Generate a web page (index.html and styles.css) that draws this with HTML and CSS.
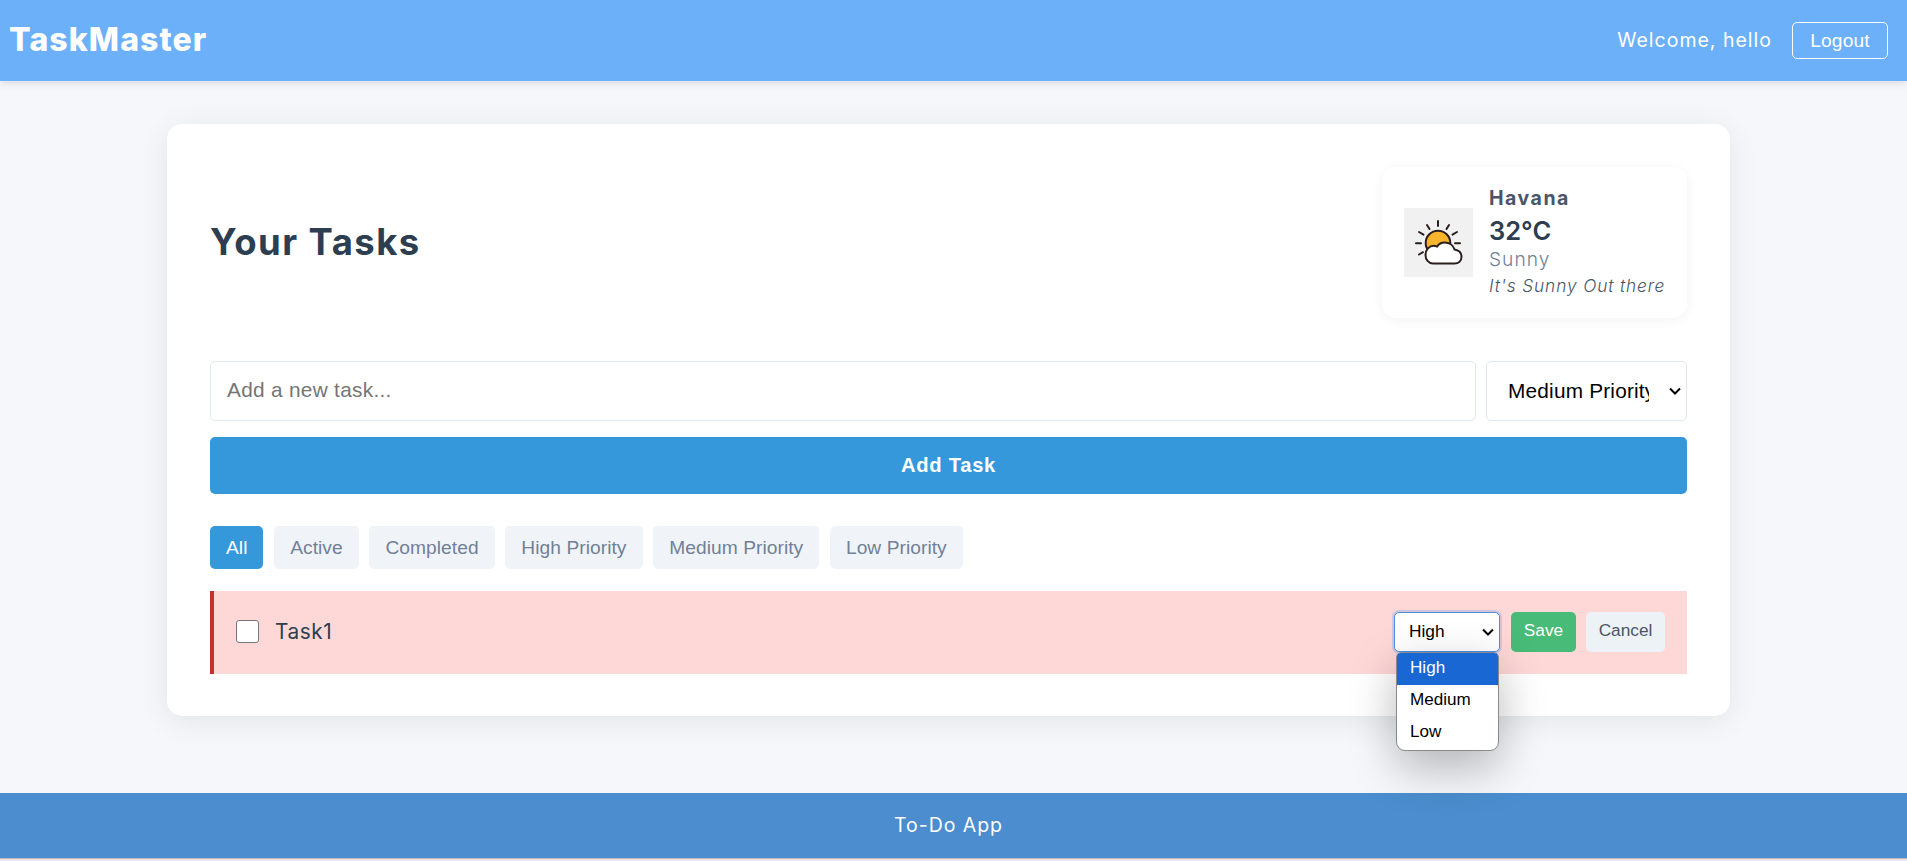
FILE: index.html
```html
<!DOCTYPE html>
<html lang="en">
<head>
<meta charset="utf-8">
<title>TaskMaster</title>
<link rel="stylesheet" href="styles.css">
</head>
<body>
<header class="topbar">
  <div class="brand">TaskMaster</div>
  <div class="account">
    <span class="welcome">Welcome, hello</span>
    <button class="logout">Logout</button>
  </div>
</header>
<main class="main">
  <section class="card">
    <div class="card-head">
      <h1 class="title">Your Tasks</h1>
      <div class="weather">
        <svg class="weather-icon" viewBox="0 0 69 69">
          <rect width="69" height="69" fill="#f1f1f1"/>
          <g stroke="#2b1f1d" stroke-width="2" stroke-linecap="round" stroke-linejoin="round">
            <path fill="none" d="M34 13v5M23 17l2.500 4M45 17l-2.500 4M15 24l4.500 2.600M53 24l-4.500 2.600M12 35.300h5M51 35.300h5M15 46.500l4-2.300"/>
            <circle cx="34" cy="35" r="12.300" fill="#f9b42d"/>
            <path fill="#fff" d="M29 55.500c-4.500 0-7.500-4-7.500-8.500 0-5.500 3.700-9.200 8.300-9.200 1.200 0 2.200.3 3.200.8 1.800-2.600 4.500-4 7.700-4 4.800 0 8.600 3 9.800 6.900 4.300.7 7 3.500 7 7.200 0 4.200-3 6.800-7 6.800z"/>
          </g>
        </svg>
        <div class="weather-text">
          <div class="city">Havana</div>
          <div class="temp">32°C</div>
          <div class="sky">Sunny</div>
          <div class="note">It's Sunny Out there</div>
        </div>
      </div>
    </div>
    <form class="add-form">
      <input class="task-input" type="text" placeholder="Add a new task...">
      <div class="priority"><span class="priority-value">Medium Priority</span>
        <svg class="chevron" viewBox="0 0 12 8"><path d="M1 1.500l5 5 5-5"/></svg></div>
      <button class="add" type="button">Add Task</button>
    </form>
    <nav class="filters">
      <button class="filter active">All</button>
      <button class="filter">Active</button>
      <button class="filter">Completed</button>
      <button class="filter">High Priority</button>
      <button class="filter">Medium Priority</button>
      <button class="filter">Low Priority</button>
    </nav>
    <div class="task">
      <span class="check"></span>
      <span class="task-name">Task1</span>
      <div class="picker">
        <div class="picker-box"><span>High</span>
          <svg class="chevron" viewBox="0 0 12 8"><path d="M1 1.500l5 5 5-5"/></svg></div>
        <ul class="menu">
          <li class="option selected">High</li>
          <li class="option">Medium</li>
          <li class="option">Low</li>
        </ul>
      </div>
      <button class="save">Save</button>
      <button class="cancel">Cancel</button>
    </div>
  </section>
</main>
<footer class="footer">To-Do App</footer>
<div class="edge"></div>
</body>
</html>
```
FILE: styles.css
```css
* { box-sizing: border-box; margin: 0; padding: 0; }
body {
  height: 861px;
  display: flex;
  flex-direction: column;
  overflow: hidden;
  background: #f5f7fb;
  font-family: Inter, "Open Sans", sans-serif;
  color: #2c3e50;
}
button { border: 0; font-family: "Liberation Sans", Arial, sans-serif; }
.topbar {
  height: 81px;
  flex: none;
  padding: 0 19px 0 9px;
  display: flex;
  align-items: center;
  justify-content: space-between;
  background: #6bb0f8;
  color: #fff;
  box-shadow: 0 2px 8px rgba(0, 0, 0, .12);
}
.brand { font-size: 32px; font-weight: 800; line-height: 79px; letter-spacing: 1.100px; padding-bottom: 2px; }
.account { display: flex; align-items: center; gap: 20px; }
.welcome { font-size: 19.500px; letter-spacing: 1px; padding-bottom: 2px; }
.logout {
  width: 96px;
  height: 37px;
  border: 1px solid #fff;
  border-radius: 5px;
  background: transparent;
  color: #fff;
  font-size: 19.200px;
  letter-spacing: .15px;
}
.main { flex: 1; padding: 43px 177px 0 167px; }
.card {
  height: 592px;
  padding: 43px;
  border-radius: 15px;
  background: #fff;
  box-shadow: 0 5px 30px rgba(0, 0, 0, .08);
}
.card-head { display: flex; align-items: center; justify-content: space-between; }
.title { font-size: 36.500px; font-weight: 700; letter-spacing: 1.450px; padding-bottom: 1px; }
.weather {
  width: 305px;
  height: 151px;
  padding-left: 22px;
  display: flex;
  align-items: center;
  gap: 16px;
  border-radius: 14px;
  box-shadow: 0 2px 12px rgba(0, 0, 0, .05);
}
.weather-icon { width: 69px; height: 69px; flex: none; }
.weather-text { white-space: nowrap; padding-bottom: 3px; }
.city { font-size: 19.500px; font-weight: 700; line-height: 33px; letter-spacing: 1.500px; color: #4a5568; }
.temp { font-size: 25.500px; font-weight: 600; line-height: 32px; }
.sky { font-size: 19.200px; font-weight: 300; line-height: 25px; letter-spacing: 1px; color: #718096; }
.note { font-size: 17.300px; font-style: italic; font-weight: 300; line-height: 28px; letter-spacing: .880px; color: #4a5568; }
.add-form {
  margin-top: 43px;
  display: grid;
  grid-template-columns: 1266px 201px;
  gap: 16px 10px;
  font-family: "Liberation Sans", Arial, sans-serif;
}
.task-input {
  height: 60px;
  padding: 0 16px 2px;
  border: 1px solid #e2e8f0;
  border-radius: 5px;
  font: 20.800px "Liberation Sans", Arial, sans-serif;
  letter-spacing: .3px;
}
.task-input::placeholder { color: #757575; }
.priority {
  height: 60px;
  padding: 0 5px 0 21px;
  display: flex;
  align-items: center;
  justify-content: space-between;
  border: 1px solid #e2e8f0;
  border-radius: 5px;
  color: #000;
  font-size: 20.800px;
  letter-spacing: .2px;
}
.priority-value { width: 141px; overflow: hidden; white-space: nowrap; }
.chevron { width: 12px; height: 8px; fill: none; stroke: #000; stroke-width: 2; }
.add {
  grid-column: 1 / -1;
  height: 57px;
  border-radius: 5px;
  background: #3498db;
  color: #fff;
  font-size: 20.200px;
  font-weight: 700;
  letter-spacing: .7px;
}
.filters { margin-top: 32px; display: flex; gap: 10.700px; }
.filter {
  height: 43px;
  padding: 0 16px;
  border-radius: 5px;
  background: #f0f4f9;
  color: #718096;
  font-size: 19.200px;
  letter-spacing: .05px;
}
.filter.active { background: #3498db; color: #fff; }
.task {
  height: 83px;
  margin-top: 22px;
  padding: 0 22px 2px;
  display: flex;
  align-items: center;
  border-left: 4px solid #c53030;
  background: #fed7d7;
}
.check { width: 23px; height: 23px; border: 1px solid #767676; border-radius: 3px; background: #fff; }
.task-name { margin: 0 auto 0 16px; font-size: 20.800px; letter-spacing: .6px; }
.picker { position: relative; margin-right: 11px; }
.picker-box {
  width: 106px;
  height: 40px;
  padding: 0 5px 0 14px;
  display: flex;
  align-items: center;
  justify-content: space-between;
  border: 1px solid #4a90e2;
  border-radius: 5px;
  background: #fff;
  box-shadow: 0 0 0 2px rgba(74, 144, 226, .25);
  color: #000;
  font: 17.280px "Liberation Sans", Arial, sans-serif;
}
.menu {
  position: absolute;
  top: 40px;
  left: 2px;
  width: 103px;
  height: 99px;
  overflow: hidden;
  list-style: none;
  border: 1px solid #8a8a8a;
  border-radius: 5px 5px 9px 9px;
  background: #fff;
  box-shadow: 0 16px 46px rgba(0, 0, 0, .28);
  color: #000;
  font: 17.100px "Liberation Sans", Arial, sans-serif;
}
.option { height: 32px; padding-left: 13px; line-height: 30px; }
.option.selected { background: #1967d2; color: #fff; }
.save, .cancel { height: 40px; padding-bottom: 2px; border-radius: 5px; font-size: 17.280px; }
.save { width: 65px; margin-right: 10px; background: #48bb78; color: #fff; }
.cancel { width: 79px; background: #edf2f7; color: #4a5568; }
.footer {
  height: 65px;
  flex: none;
  background: #4b8dce;
  color: #fff;
  font-size: 19.500px;
  line-height: 64px;
  letter-spacing: .95px;
  text-align: center;
  padding-right: 10px;
}
.edge { height: 3px; flex: none; border-top: 1px solid #b9b9c4; background: #f5e3e1; }
```
